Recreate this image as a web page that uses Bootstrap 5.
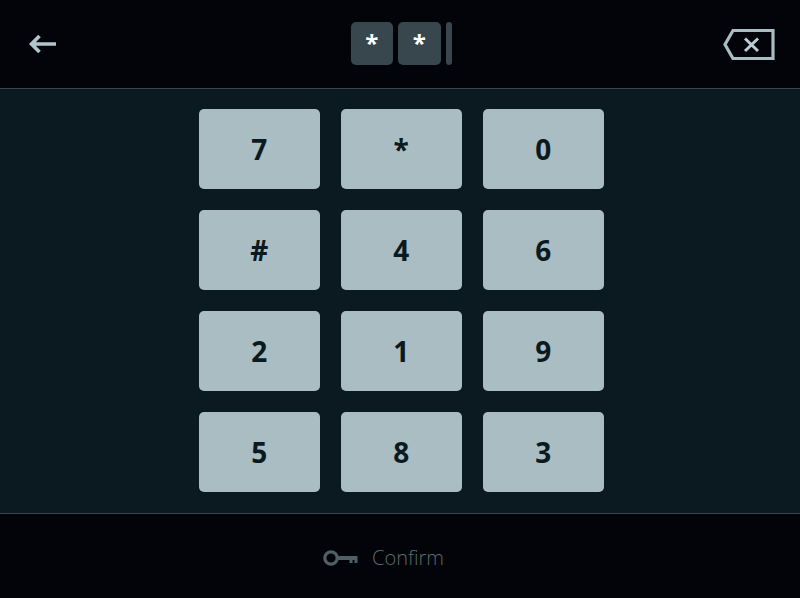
<!DOCTYPE html>
<html lang="en">
<head>
<meta charset="utf-8">
<title>Keypad</title>
<link href="https://cdn.jsdelivr.net/npm/bootstrap@5.3.0/dist/css/bootstrap.min.css" rel="stylesheet">
<style>
html, body { height: 100%; }
body { background: #0b1920; font-family: "Open Sans", sans-serif; overflow: hidden; }
.screen { height: 598px; }
.top-bar { height: 89px; background: #020409; border-bottom: 1px solid #37474d; padding: 0 25px 2px 28px; display: grid; grid-template-columns: 1fr auto 1fr; align-items: center; }
.code-slot { width: 42.5px; height: 43px; border-radius: 5px; background: #37474d; color: #fff; font-size: 24px; font-weight: 700; line-height: 1; }
.code-caret { width: 6px; height: 43px; border-radius: 3px; background: #37474d; }
.code-row { gap: 5px; margin-right: 1px; }
.pad-area { height: 424px; padding-top: 20px; }
.pad-grid { display: grid; grid-template-columns: repeat(3, 121.5px); grid-auto-rows: 80px; column-gap: 20.5px; row-gap: 21px; width: 406px; margin-left: 198.5px; }
.pad-key { background: #a9bdc2; color: #0b1920; border: 0; border-radius: 5px; font-size: 28px; font-weight: 700; padding: 0; line-height: 1; }
.pad-key:hover, .pad-key:active { background: #a9bdc2 !important; color: #0b1920 !important; }
.foot-bar { height: 85px; background: #020409; border-top: 1px solid #37474d; color: #5c6a6c; font-size: 20px; font-weight: 300; padding: 3px 0 0 322.5px; }
.foot-bar span { margin-left: 14.5px; }
.pad-icon { display: block; }
.icon-drop { margin-top: 1px; }
.icon-end { justify-self: end; }
</style>
</head>
<body>
<div class="screen d-flex flex-column">
  <header class="top-bar">
    <svg class="pad-icon icon-drop" width="30" height="22" viewBox="0 0 30 22" aria-label="Back">
      <path d="M11.5 3 L3.5 11 L11.5 19 M4 11 H28" fill="none" stroke="#b1c5ca" stroke-width="3.6"/>
    </svg>
    <div class="code-row d-flex align-items-center">
      <div class="code-slot d-flex align-items-center justify-content-center">*</div>
      <div class="code-slot d-flex align-items-center justify-content-center">*</div>
      <div class="code-caret"></div>
    </div>
    <svg class="pad-icon icon-end icon-drop" width="52" height="32" viewBox="0 0 52 32" aria-label="Delete">
      <path d="M10 2.5 H50 V30.5 H10 L2 16.5 Z" fill="none" stroke="#a9bdc2" stroke-width="3.2"/>
      <path d="M22 10.5 L35 23 M35 10.5 L22 23" fill="none" stroke="#b9cdd2" stroke-width="3"/>
    </svg>
  </header>
  <main class="pad-area">
    <div class="pad-grid">
      <button class="btn pad-key">7</button>
      <button class="btn pad-key">*</button>
      <button class="btn pad-key">0</button>
      <button class="btn pad-key">#</button>
      <button class="btn pad-key">4</button>
      <button class="btn pad-key">6</button>
      <button class="btn pad-key">2</button>
      <button class="btn pad-key">1</button>
      <button class="btn pad-key">9</button>
      <button class="btn pad-key">5</button>
      <button class="btn pad-key">8</button>
      <button class="btn pad-key">3</button>
    </div>
  </main>
  <footer class="foot-bar d-flex align-items-center">
    <svg class="pad-icon" width="35" height="18" viewBox="0 0 35 18" aria-hidden="true">
      <circle cx="8" cy="9" r="6.2" fill="none" stroke="#4f5f66" stroke-width="3.2"/>
      <path d="M13 7 H34.5 V14 H31.5 V11 H29.5 V14 H26.5 V11 H13 Z" fill="#4f5f66"/>
    </svg>
    <span>Confirm</span>
  </footer>
</div>
<script src="https://cdn.jsdelivr.net/npm/bootstrap@5.3.0/dist/js/bootstrap.bundle.min.js"></script>
</body>
</html>
